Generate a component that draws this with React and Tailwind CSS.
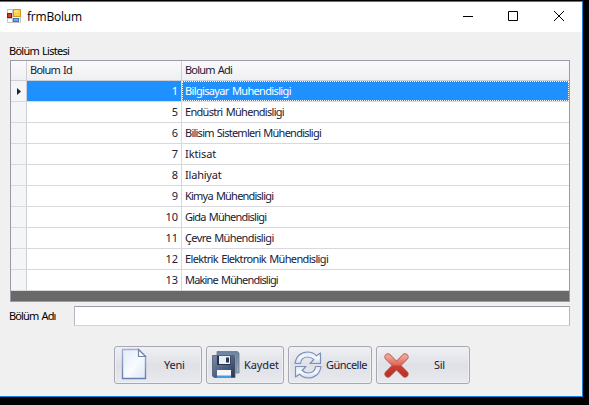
import React from "react";

const rows = [
  { id: 1, name: "Bilgisayar Muhendisligi", fit: "tracking-[-0.65px]" },
  { id: 5, name: "Endüstri Mühendisligi", fit: "tracking-[-0.7px]" },
  { id: 6, name: "Bilisim Sistemleri Mühendisligi", fit: "tracking-[-0.76px]" },
  { id: 7, name: "Iktisat", fit: "tracking-[-0.1px]" },
  { id: 8, name: "Ilahiyat", fit: "tracking-[-0.2px]" },
  { id: 9, name: "Kimya Mühendisligi", fit: "tracking-[-0.78px]" },
  { id: 10, name: "Gida Mühendisligi", fit: "tracking-[-0.77px]" },
  { id: 11, name: "Çevre Mühendisligi", fit: "tracking-[-0.61px]" },
  { id: 12, name: "Elektrik Elektronik Mühendisligi", fit: "tracking-[-0.66px]" },
  { id: 13, name: "Makine Mühendisligi", fit: "tracking-[-0.82px]" },
];

function FormIcon() {
  return (
    <svg width="14" height="14" viewBox="0 0 14 14" className="mb-[2px] shrink-0">
      <path d="M.5.500h13v13H.5zM.5 4.500h5M5.500.5v13M.5 9.500h13M9.500 9v4.500" fill="#fff" stroke="#c5c5c5" />
      <rect x=".5" y="4.500" width="4" height="4" fill="#d33a2c" stroke="#8d1711" />
      <rect x="6.500" y=".5" width="7" height="7" fill="#ffd04a" stroke="#d49a16" />
      <path d="M7.500 1.500h3v2h-3z" fill="#ffe99a" />
      <rect x="6.500" y="9.500" width="5" height="3" fill="#78a8ee" stroke="#3c72c8" />
    </svg>
  );
}

function PageIcon() {
  return (
    <svg width="26" height="32" viewBox="0 0 26 32" className="mb-[2px]">
      <defs>
        <linearGradient id="page" x1="0" y1="0" x2="1" y2="1">
          <stop stopColor="#e3ebf8" />
          <stop offset=".55" stopColor="#f8fbff" />
          <stop offset="1" stopColor="#dce7f6" />
        </linearGradient>
        <linearGradient id="pageEdge" x1="0" y1="0" x2="0" y2="1">
          <stop stopColor="#a5b0cf" />
          <stop offset="1" stopColor="#697fae" />
        </linearGradient>
      </defs>
      <path d="M1.500 1.500h16l7 7v22h-23z" fill="url(#page)" stroke="url(#pageEdge)" strokeWidth="1.400" />
      <path d="M17.500 1.500v7h7z" fill="#fff" stroke="#7183ad" strokeWidth="1.200" />
    </svg>
  );
}

function DisksIcon() {
  return (
    <svg width="28" height="28" viewBox="0 0 28 28">
      <defs>
        <linearGradient id="disk" x1="0" y1="0" x2="1" y2="1">
          <stop stopColor="#7c8ba9" />
          <stop offset=".5" stopColor="#526381" />
          <stop offset="1" stopColor="#29364e" />
        </linearGradient>
        <linearGradient id="diskBack" x1="0" y1="0" x2="0" y2="1">
          <stop stopColor="#6d829f" />
          <stop offset="1" stopColor="#a7aebd" />
        </linearGradient>
      </defs>
      <path d="M5 .5h20.500l1.500 1.500v20h-3V4.500H5z" fill="url(#diskBack)" stroke="#66788f" strokeWidth=".8" />
      <path d="M.5 4.500h21.500l1 1v21H2l-1.500-1.500z" fill="url(#disk)" stroke="#4a5a76" strokeWidth=".8" />
      <path d="M5 5h13.500v9H5z" fill="#26344b" />
      <path d="M7 5h11v8H7z" fill="#e9eef5" />
      <path d="M14 6.500h3v5h-3z" fill="#26364f" />
      <path d="M5 19h14v8H5z" fill="#f4f7fb" />
      <path d="M5 24.500h14V27H5z" fill="#489bd8" />
    </svg>
  );
}

function RefreshIcon() {
  return (
    <svg width="28" height="28" viewBox="0 0 28 28">
      <defs>
        <linearGradient id="refresh" x1="0" y1="0" x2="0" y2="1">
          <stop stopColor="#dbe6f6" />
          <stop offset=".5" stopColor="#f7faff" />
          <stop offset="1" stopColor="#cbdaf0" />
        </linearGradient>
      </defs>
      <g fill="url(#refresh)" stroke="#8090b5" strokeWidth="1.200" strokeLinejoin="round">
        <path d="M1 12.500C2 5 7.500 1 13.500 1c4 0 7 1.500 9 3.800L26.500 2v10.500H16l3.800-4C18 6.800 16 6 13.500 6 9.500 6 7 8.500 6.500 12.500z" />
        <path d="M27 15.500C26 23 20.500 27 14.500 27c-4 0-7-1.500-9-3.800L1.500 26V15.500H12l-3.800 4c1.800 1.700 3.800 2.500 6.300 2.500 4 0 6.500-2.500 7-6.500z" />
      </g>
    </svg>
  );
}

function CrossIcon() {
  return (
    <svg width="25" height="25" viewBox="0 0 25 25">
      <defs>
        <linearGradient id="cross" x1="0" y1="0" x2="0" y2="1">
          <stop stopColor="#f0a093" />
          <stop offset=".45" stopColor="#df6557" />
          <stop offset=".55" stopColor="#cc3f35" />
          <stop offset="1" stopColor="#bd3329" />
        </linearGradient>
      </defs>
      <path d="M4 4 21 21M21 4 4 21" fill="none" stroke="#b85850" strokeWidth="7" strokeLinecap="round" />
      <path d="M4 4 21 21M21 4 4 21" fill="none" stroke="url(#cross)" strokeWidth="5.600" strokeLinecap="round" />
    </svg>
  );
}

function ToolButton({ className, iconClass, textClass, icon, children }) {
  return (
    <button
      className={`flex h-[38px] items-center rounded-[3px] border border-[#a6a9b3] bg-linear-to-b from-[#f0f1f4] via-[#dfe1e7] to-[#e9eaee] shadow-[inset_0_0_0_1px_#eff0f3] ${className}`}
    >
      <span className={`flex shrink-0 ${iconClass}`}>{icon}</span>
      <span className={`whitespace-nowrap ${textClass}`}>{children}</span>
    </button>
  );
}

export default function App() {
  return (
    <div className="h-[405px] w-[589px] overflow-hidden bg-black pt-px font-['Noto_Sans',sans-serif] text-[11px] leading-[14px] text-[#202035] [word-spacing:1px]">
      <div className="flex h-[396px] w-[583px] flex-col border-t border-r border-b border-[#1883d7] bg-[#f0f0f0]">
        <header className="flex h-[30px] shrink-0 items-center bg-white pl-[7px] text-black">
          <FormIcon />
          <h1 className="ml-[6px] text-[12px] leading-4 tracking-[-0.2px] font-['Open_Sans',sans-serif]">frmBolum</h1>
          <div className="mb-[2px] ml-auto flex items-center pr-[17px]">
            <svg width="102" height="12" viewBox="0 0 102 12" fill="none" stroke="#000">
              <path d="M0 6.500h10M45.500 1.500h9v9h-9zM91 1l10 10M101 1 91 11" />
            </svg>
          </div>
        </header>

        <main className="flex flex-col pl-[10px] pt-[12px]">
          <h2 className="-ml-px h-4 leading-[14px] tracking-[-0.75px] text-black">Bölüm Listesi</h2>
          <section className="h-[242px] w-[560px] border border-[#9a9ba7] bg-[#696969]">
            <div className="grid h-5 grid-cols-[16px_155px_1fr] border-b border-[#ceced4] bg-linear-to-b from-[#f9f9fb] to-[#eff0f2] leading-[18px]">
              <div className="border-r border-[#ceced4]" />
              <div className="border-r border-[#ceced4] pl-[3px] tracking-[-0.75px]">Bolum Id</div>
              <div className="pl-[3px] tracking-[-0.8px]">Bolum Adi</div>
            </div>
            {rows.map((row, index) => (
              <div
                key={row.id}
                className="grid h-[21px] grid-cols-[16px_155px_1fr] border-b border-[#d8d8dd] bg-white leading-[20px]"
              >
                <div className="flex items-center border-r border-[#ceced4] bg-[#f4f5f7] pl-[6px]">
                  {index === 0 && (
                    <svg width="4" height="7" viewBox="0 0 4 7" fill="#202035">
                      <path d="M0 0 4 3.500 0 7z" />
                    </svg>
                  )}
                </div>
                <div className={`border-r border-[#d8d8dd] pr-[3px] text-right ${index === 0 ? "bg-[#1e90ff] text-white" : ""}`}>
                  {row.id}
                </div>
                <div
                  className={`whitespace-nowrap ${row.fit} ${
                    index === 0
                      ? "border border-dotted border-white bg-[#1e90ff] pl-[2px] leading-[18px] text-white"
                      : "pl-[3px]"
                  }`}
                >
                  {row.name}
                </div>
              </div>
            ))}
          </section>

          <div className="mt-1 flex h-5 items-center">
            <label htmlFor="bolum" className="-ml-px w-[65px] tracking-[-0.85px] text-black">Bölüm Adı</label>
            <input
              id="bolum"
              className="h-5 w-[496px] border border-x-[#b6b7bf] border-t-[#9a9ba7] border-b-[#d3d4d9] bg-white outline-none"
            />
          </div>

          <div className="ml-[104px] mt-5 flex gap-1">
            <ToolButton className="w-[88px]" iconClass="ml-[6px] w-[26px]" textClass="ml-[17px] tracking-[-0.2px]" icon={<PageIcon />}>
              Yeni
            </ToolButton>
            <ToolButton className="w-[78px]" iconClass="ml-[5px] w-[28px]" textClass="ml-[4px] tracking-[-0.1px]" icon={<DisksIcon />}>
              Kaydet
            </ToolButton>
            <ToolButton className="w-[84px]" iconClass="ml-[5px] w-[28px]" textClass="ml-[4px] tracking-[-0.5px]" icon={<RefreshIcon />}>
              Güncelle
            </ToolButton>
            <ToolButton className="w-[94px]" iconClass="ml-[7px] w-[25px]" textClass="ml-[25px] tracking-[-0.3px]" icon={<CrossIcon />}>
              Sil
            </ToolButton>
          </div>
        </main>
      </div>
    </div>
  );
}
